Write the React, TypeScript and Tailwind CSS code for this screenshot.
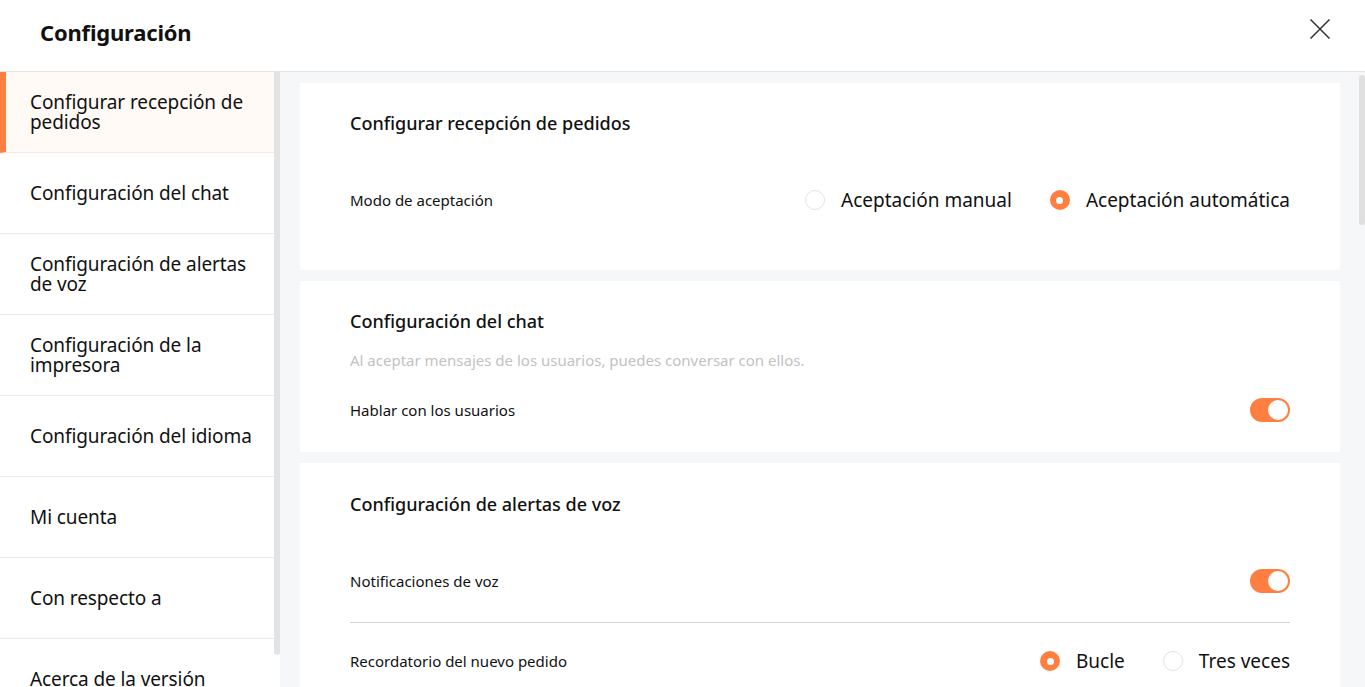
import { useState } from "react"

const navItems = [
  "Configurar recepción de pedidos",
  "Configuración del chat",
  "Configuración de alertas de voz",
  "Configuración de la impresora",
  "Configuración del idioma",
  "Mi cuenta",
  "Con respecto a",
  "Acerca de la versión",
]

function Radio({ checked, label, onClick }: { checked: boolean; label: string; onClick: () => void }) {
  return (
    <button type="button" onClick={onClick} className="flex h-6 items-center gap-4">
      {checked ? (
        <span className="flex h-5 w-5 items-center justify-center rounded-full bg-[#ff7f41]">
          <span className="h-[7px] w-[7px] rounded-full bg-white" />
        </span>
      ) : (
        <span className="h-5 w-5 rounded-full border border-[#dfe3e8] bg-white" />
      )}
      <span className="text-[19px] leading-6 text-[#111]">{label}</span>
    </button>
  )
}

function Toggle({ on, onChange }: { on: boolean; onChange: (v: boolean) => void }) {
  return (
    <button
      type="button"
      onClick={() => onChange(!on)}
      className={`flex h-6 w-10 items-center rounded-full px-[2px] ${on ? "justify-end bg-[#ff7f41]" : "justify-start bg-[#dcdfe6]"}`}
    >
      <span className="h-5 w-5 rounded-full bg-white" />
    </button>
  )
}

export default function App() {
  const [active, setActive] = useState(0)
  const [mode, setMode] = useState("auto")
  const [chat, setChat] = useState(true)
  const [voice, setVoice] = useState(true)
  const [reminder, setReminder] = useState("loop")

  return (
    <div className="flex h-[687px] flex-col overflow-hidden bg-white font-['Noto_Sans',sans-serif] text-[#111]">
      <header className="flex h-[72px] shrink-0 items-center justify-between border-b border-[#e5e5e5] pr-[35px] pb-2 pl-10">
        <h1 className="text-[22px] font-bold leading-7 tracking-[-0.2px]">Configuración</h1>
        <button type="button" className="-mt-[6px]">
          <svg width="20" height="20" viewBox="0 0 20 20" fill="none" stroke="#333" strokeWidth="1.5">
            <path d="M0.5 0.5L19.5 19.5M19.5 0.5L0.5 19.5" />
          </svg>
        </button>
      </header>

      <div className="flex min-h-0 flex-1">
        <aside className="relative w-[280px] shrink-0 overflow-hidden pr-[6px]">
          {navItems.map((item, i) => (
            <button
              type="button"
              key={item}
              onClick={() => setActive(i)}
              className={`flex h-[81px] w-full shrink-0 items-center border-b border-[#ebebeb] pr-2 pb-[1px] text-left text-[19px] leading-[20px] tracking-[-0.1px] ${
                active === i ? "border-l-[6px] border-l-[#ff7f41] bg-[#fffaf5] pl-6" : "pl-[30px]"
              }`}
            >
              {item}
            </button>
          ))}
          <div className="absolute top-0 right-0 h-[583px] w-[6px] rounded-b-full bg-[#e3e3e3]" />
        </aside>

        <main className="relative flex-1 overflow-hidden bg-[#f6f7f9] pt-[11px] pr-[25px] pl-5">
          <div className="flex flex-col gap-[11px]">
            <section className="bg-white px-[50px] pt-[28px] pb-[58px]">
              <h2 className="text-[18px] leading-6 font-medium">Configurar recepción de pedidos</h2>
              <div className="mt-[53px] flex h-6 items-center justify-between">
                <span className="text-[15px]">Modo de aceptación</span>
                <div className="flex items-center gap-[38px]">
                  <Radio checked={mode === "manual"} label="Aceptación manual" onClick={() => setMode("manual")} />
                  <Radio checked={mode === "auto"} label="Aceptación automática" onClick={() => setMode("auto")} />
                </div>
              </div>
            </section>

            <section className="bg-white px-[50px] pt-[28px] pb-[30px]">
              <h2 className="text-[18px] leading-6 font-medium">Configuración del chat</h2>
              <p className="mt-[17px] text-[15px] leading-5 text-[#c2c2c2]">
                Al aceptar mensajes de los usuarios, puedes conversar con ellos.
              </p>
              <div className="mt-[28px] flex h-6 items-center justify-between">
                <span className="text-[15px]">Hablar con los usuarios</span>
                <Toggle on={chat} onChange={setChat} />
              </div>
            </section>

            <section className="bg-white px-[50px] pt-[29px] pb-[28px]">
              <h2 className="text-[18px] leading-6 font-medium">Configuración de alertas de voz</h2>
              <div className="mt-[53px] flex h-6 items-center justify-between">
                <span className="text-[15px]">Notificaciones de voz</span>
                <Toggle on={voice} onChange={setVoice} />
              </div>
              <div className="mt-[29px] flex h-[52px] items-end justify-between border-t border-[#d4d4d4] pb-[1px]">
                <span className="text-[15px] leading-6">Recordatorio del nuevo pedido</span>
                <div className="flex items-center gap-[38px]">
                  <Radio checked={reminder === "loop"} label="Bucle" onClick={() => setReminder("loop")} />
                  <Radio checked={reminder === "three"} label="Tres veces" onClick={() => setReminder("three")} />
                </div>
              </div>
            </section>
          </div>
          <div className="absolute top-[3px] right-0 h-[150px] w-[6px] rounded-full bg-[#e0e0e0]" />
        </main>
      </div>
    </div>
  )
}
